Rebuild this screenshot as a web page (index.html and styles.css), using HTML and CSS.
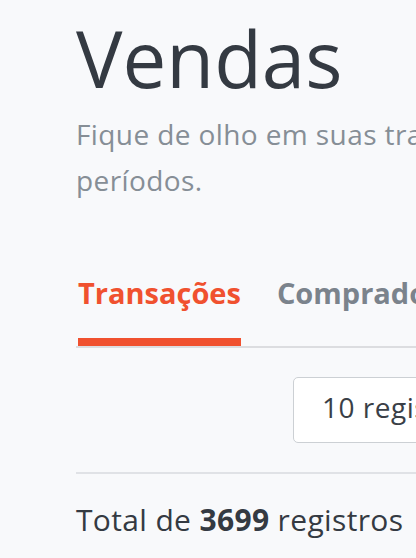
FILE: index.html
```html
<!DOCTYPE html>
<html lang="pt-BR">
<head>
    <meta charset="UTF-8">
    <meta name="viewport" content="width=device-width, initial-scale=1.0">
    <title>Vendas</title>
    <link rel="stylesheet" href="styles.css">
</head>
<body>

    <div class="page">
        <h1>Vendas</h1>
        <p class="subtitle">Fique de olho em suas transações e vendas em diferentes<br>períodos.</p>

        <div class="tabs">
            <a class="tab active" href="#">Transações</a>
            <a class="tab" href="#">Compradores</a>
        </div>

        <div class="toolbar">
            <div class="per-page">10 registros por página</div>
        </div>

        <div class="summary">Total de <b>3699</b> registros</div>
    </div>

</body>
</html>
```

FILE: styles.css
```css
html, body {
    margin: 0;
    overflow: hidden;
}
body {
    font-family: "Open Sans", Lato, sans-serif;
    background: #f8f9fb;
    color: #343a42;
}
.page {
    width: 900px;
    padding: 0 0 0 76px;
}
h1 {
    margin: 0;
    padding-top: 13px;
    font-size: 78px;
    font-weight: 400;
    line-height: 90px;
    color: #343a42;
}
.subtitle {
    margin: 8px 0 0;
    font-size: 28px;
    line-height: 46px;
    letter-spacing: 0.4px;
    color: #868e96;
}
.tabs {
    display: flex;
    gap: 36px;
    margin-top: 72px;
    padding-left: 2px;
    border-bottom: 2px solid #dcdde0;
}
.tab {
    font-size: 29px;
    font-weight: 700;
    line-height: 36px;
    text-decoration: none;
    color: #7b838c;
    padding-bottom: 27px;
    border-bottom: 8px solid transparent;
}
.tab.active {
    color: #f0512f;
    border-bottom-color: #f0512f;
}
.toolbar {
    display: flex;
    padding: 29px 0 29px 217px;
    border-bottom: 2px solid #e0e2e6;
}
.per-page {
    width: 400px;
    height: 58px;
    line-height: 58px;
    padding: 0 0 6px 28px;
    background: #fff;
    border: 1px solid #ccd0d4;
    border-radius: 5px;
    font-size: 28px;
    letter-spacing: 0.5px;
    color: #3a3f47;
}
.summary {
    padding-top: 26px;
    font-size: 30px;
    line-height: 40px;
    letter-spacing: 0.35px;
    color: #343a42;
}
```
